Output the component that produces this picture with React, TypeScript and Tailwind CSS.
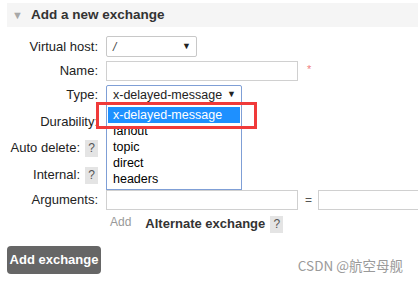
import React from "react";

const Help = () => (
  <span className="ml-[5px] inline-flex h-[17px] w-[13px] shrink-0 items-center justify-center bg-[#e4e4e4] text-[12px] text-[#555]">
    ?
  </span>
);

const options = ["x-delayed-message", "fanout", "topic", "direct", "headers"];

export default function App() {
  return (
    <div className="relative h-[281px] w-[418px] overflow-hidden bg-white font-['Liberation_Sans',Arial,sans-serif] text-[13px] text-[#222]">
      {/* section header */}
      <div className="ml-[7px] mt-[3px] flex h-[24px] items-center bg-[#f5f5f5]">
        <span className="ml-[5px] text-[11px] text-[#a8a8a8]">▼</span>
        <span className="ml-[8px] text-[13.5px] font-bold text-[#333]">Add a new exchange</span>
      </div>

      <div className="ml-[7px]">
        {/* virtual host */}
        <div className="mt-[8px] flex h-[23px] items-center">
          <div className="w-[91px] shrink-0 text-right">Virtual host:</div>
          <div className="ml-[8px] flex h-[21px] w-[91px] shrink-0 items-center justify-between rounded-[2px] border border-[#c8c8c8] pl-[6px] pr-[5px]">
            <span className="text-[12px] italic text-[#444]">/</span>
            <span className="text-[9px]">▼</span>
          </div>
        </div>

        {/* name */}
        <div className="mt-[1px] flex h-[24px] items-center">
          <div className="w-[91px] shrink-0 text-right">Name:</div>
          <div className="ml-[8px] h-[20px] w-[192px] shrink-0 border border-[#d0d0d0]" />
          <span className="ml-[9px] -mt-[4px] text-[11px] text-[#f08080]">*</span>
        </div>

        {/* type */}
        <div className="flex h-[24px] items-center">
          <div className="w-[91px] shrink-0 text-right">Type:</div>
          <div className="relative ml-[8px] h-[20px] w-[136px] shrink-0">
            <div className="flex h-full items-center justify-between rounded-[2px] border border-[#7f9fd6] pl-[6px] pr-[5px] text-[12.5px]">
              <span>x-delayed-message</span>
              <span className="text-[9px]">▼</span>
            </div>
            {/* open dropdown list */}
            <div className="absolute left-0 top-[19px] z-10 w-[136px] border border-[#7f9fd6] bg-white pb-[2px] pt-[2px] text-[12.5px] leading-[16px]">
              {options.map((o, i) => (
                <div
                  key={o}
                  className={i === 0 ? "mx-[1px] bg-[#1e90ff] pl-[5px] text-white" : "pl-[6px] text-black"}
                >
                  {o}
                </div>
              ))}
            </div>
            {/* red highlight box */}
            <div className="pointer-events-none absolute left-[-10px] top-[17px] z-20 h-[27px] w-[161px] border-[3px] border-[#f03a3a]" />
          </div>
        </div>

        {/* durability */}
        <div className="mt-[3px] flex h-[24px] items-center">
          <div className="w-[91px] shrink-0 text-right">Durability:</div>
        </div>

        {/* auto delete */}
        <div className="mt-[2px] flex h-[24px] items-center">
          <div className="flex w-[91px] shrink-0 items-center justify-end">
            Auto delete: <Help />
          </div>
        </div>

        {/* internal */}
        <div className="mt-[3px] flex h-[24px] items-center">
          <div className="flex w-[91px] shrink-0 items-center justify-end">
            Internal: <Help />
          </div>
        </div>

        {/* arguments */}
        <div className="mt-[1px] flex h-[24px] items-center">
          <div className="w-[91px] shrink-0 text-right">Arguments:</div>
          <div className="ml-[8px] h-[20px] w-[192px] shrink-0 border border-[#d0d0d0]" />
          <span className="ml-[7px] shrink-0 text-[12px] text-[#555]">=</span>
          <div className="ml-[6px] h-[20px] w-[120px] shrink-0 border border-[#d0d0d0]" />
        </div>

        {/* add / alternate exchange */}
        <div className="mt-[2px] flex h-[20px] items-center pl-[103px]">
          <span className="-mt-[4px] text-[12px] text-[#999]">Add</span>
          <span className="ml-[14px] text-[13px] font-bold text-[#333]">Alternate exchange</span>
          <Help />
        </div>

        <div className="mt-[12px] flex items-end justify-between">
          <button className="h-[28px] w-[94px] rounded-[4px] bg-[#666] text-[13px] font-bold text-white">
            Add exchange
          </button>
          <span className="-mb-[1px] mr-[15px] font-['Noto_Sans_CJK_SC',sans-serif] text-[13.5px] text-[#9a9a9a]">
            CSDN @航空母舰
          </span>
        </div>
      </div>
    </div>
  );
}
